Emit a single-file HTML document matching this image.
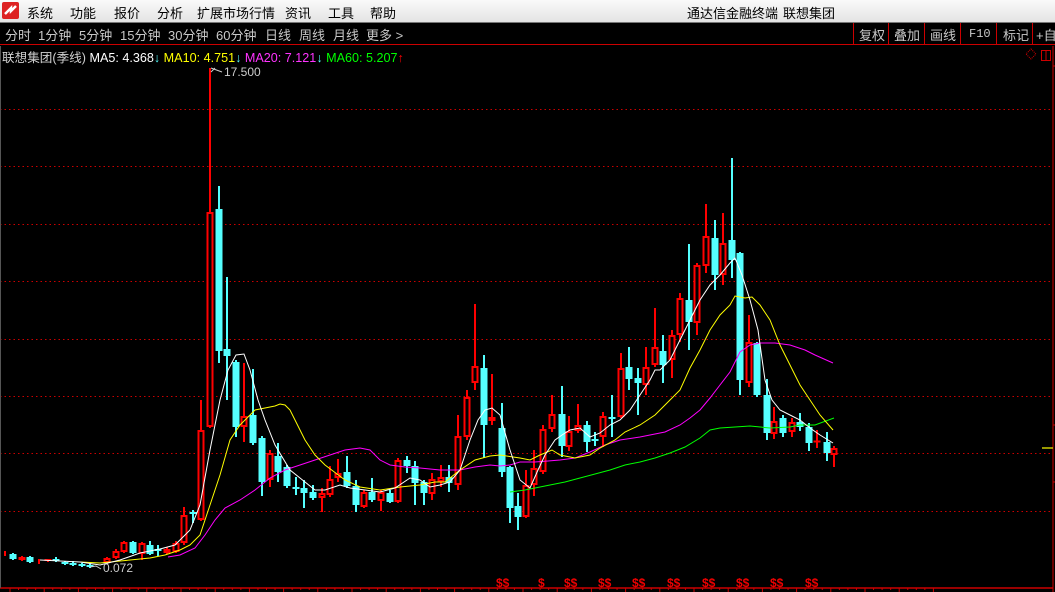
<!DOCTYPE html>
<html><head><meta charset="utf-8">
<style>
*{margin:0;padding:0;box-sizing:border-box}
body{width:1055px;height:592px;overflow:hidden;background:#000;font-family:"Liberation Sans","Noto Sans CJK SC",sans-serif;position:relative}
#menu{position:absolute;left:0;top:0;width:1055px;height:23px;background:linear-gradient(#fafafa,#e4e4e4);border-bottom:1px solid #777;font-size:13px;color:#000}
#menu span{position:absolute;top:3px;white-space:nowrap}
#tb{position:absolute;left:0;top:23px;width:1055px;height:22px;border-bottom:1px solid #c00;font-size:13px;color:#c8c8c8}
#tb span{position:absolute;top:2px;white-space:nowrap}
.btn{position:absolute;top:0;height:22px;border-left:1px solid #c00}
#info{position:absolute;left:2px;top:47px;font-size:12.6px;white-space:nowrap;color:#d0d0d0}
svg{position:absolute;left:0;top:0}
</style></head><body>
<div id="menu">
<div style="position:absolute;left:2px;top:2px;width:17px;height:17px;background:#d22;border-radius:2px"><svg width="17" height="17"><path d="M3 12 L9 6 L9 9 L14 4" stroke="#fff" stroke-width="2.5" fill="none"/></svg></div>
<span style="left:27px">系统</span><span style="left:70px">功能</span><span style="left:114px">报价</span><span style="left:157px">分析</span><span style="left:197px">扩展市场行情</span><span style="left:285px">资讯</span><span style="left:328px">工具</span><span style="left:370px">帮助</span>
<span style="left:687px">通达信金融终端</span><span style="left:783px">联想集团</span>
</div>
<div id="tb">
<span style="left:5px">分时</span><span style="left:38px">1分钟</span><span style="left:79px">5分钟</span><span style="left:120px">15分钟</span><span style="left:168px">30分钟</span><span style="left:216px">60分钟</span><span style="left:265px">日线</span><span style="left:299px">周线</span><span style="left:333px">月线</span><span style="left:366px">更多 &gt;</span>
<div class="btn" style="left:853px"></div><div class="btn" style="left:888px"></div><div class="btn" style="left:924px"></div><div class="btn" style="left:960px"></div><div class="btn" style="left:996px"></div><div class="btn" style="left:1032px"></div>
<span style="left:859px">复权</span><span style="left:894px">叠加</span><span style="left:930px">画线</span><span style="left:969px;top:4px;font-family:'Liberation Mono',monospace;font-size:12px">F10</span><span style="left:1003px">标记</span><span style="left:1036px">+自</span>
</div>
<div id="info">联想集团(季线) <span style="color:#fff">MA5: 4.368</span><span style="color:#5ff">↓</span> <span style="color:#ff0">MA10: 4.751</span><span style="color:#5ff">↓</span> <span style="color:#f3f">MA20: 7.121</span><span style="color:#5ff">↓</span> <span style="color:#0f0">MA60: 5.207</span><span style="color:#f00">↑</span></div>
<svg id="c" width="1055" height="592" style="pointer-events:none">
<g stroke="#c00" stroke-width="1" stroke-dasharray="1.5 3">
<line x1="0" y1="109.5" x2="1052" y2="109.5"/><line x1="0" y1="166.5" x2="1052" y2="166.5"/><line x1="0" y1="224.5" x2="1052" y2="224.5"/><line x1="0" y1="281.5" x2="1052" y2="281.5"/><line x1="0" y1="339.5" x2="1052" y2="339.5"/><line x1="0" y1="396.5" x2="1052" y2="396.5"/><line x1="0" y1="453.5" x2="1052" y2="453.5"/><line x1="0" y1="511.5" x2="1052" y2="511.5"/>
</g>
<line x1="1053" y1="46" x2="1053" y2="592" stroke="#c00"/>
<line x1="0" y1="588" x2="1053" y2="588" stroke="#c00" stroke-width="1.5"/>
<line x1="0.5" y1="46" x2="0.5" y2="588" stroke="#555"/>
<line x1="1042" y1="448" x2="1053" y2="448" stroke="#cc0" stroke-width="1.5"/>
<path d="M1031 49 L1036 54 L1031 59 L1026 54 Z" stroke="#c00" fill="none" stroke-dasharray="1 1"/>
<rect x="1041.5" y="50.5" width="9" height="10" stroke="#c00" fill="none"/><line x1="1046" y1="50" x2="1046" y2="61" stroke="#c00"/>
<g id="cand"></g>
<g fill="none" stroke-width="1">
<polyline id="m60" stroke="#0f0"/><polyline id="m20" stroke="#f0f"/><polyline id="m10" stroke="#ff0"/><polyline id="m5" stroke="#fff"/>
</g>
<path d="M211 72 L215 68 M211 68 L222 72" stroke="#ccc" fill="none"/>
<text x="224" y="76" fill="#ccc" font-size="12" font-family="Liberation Sans">17.500</text>
<path d="M90 567 L96 566 L101 569" stroke="#ccc" fill="none"/>
<text x="103" y="572" fill="#ccc" font-size="12" font-family="Liberation Sans">0.072</text>
<g fill="#e00" font-size="12" font-weight="bold" font-family="Liberation Sans">
<text x="496" y="587">$$</text><text x="538" y="587">$</text><text x="564" y="587">$$</text><text x="598" y="587">$$</text><text x="632" y="587">$$</text><text x="667" y="587">$$</text><text x="702" y="587">$$</text><text x="736" y="587">$$</text><text x="770" y="587">$$</text><text x="805" y="587">$$</text>
</g>
<g id="ticks" stroke="#c00"></g>
</svg>
<script>
var D=[[5,555,553,551,556],[13,554,559,553,560],[22,560,557,556,561],[30,557,562,556,563],[39,562,560,559,564],[48,561,560,559,562],[56,560,560,557,562],[65,562,564,561,565],[73,563,565,561,566],[82,564,566,563,567],[90,565,567,564,568],[107,563,558,557,564],[116,558,551,549,559],[124,552,542,541,553],[133,542,553,541,554],[142,554,543,542,560],[150,545,554,541,555],[158,550,550,545,556],[167,553,549,547,554],[176,552,543,541,553],[184,543,515,507,545],[193,513,513,510,523],[201,520,430,400,521],[210,427,212,68,428],[219,209,351,186,363],[227,349,356,277,400],[236,362,427,360,437],[244,427,416,363,442],[253,415,443,369,445],[262,438,482,436,496],[270,480,453,450,487],[278,456,472,443,482],[287,467,486,465,488],[296,488,488,477,495],[304,488,493,480,508],[313,492,498,485,500],[322,498,493,488,512],[330,495,479,466,497],[338,478,473,459,482],[347,472,486,456,488],[356,486,505,480,512],[364,507,492,490,508],[372,492,500,478,502],[381,501,492,490,511],[390,493,502,490,503],[398,502,460,458,503],[407,460,466,456,473],[415,466,483,461,505],[424,482,493,480,505],[432,494,479,473,500],[441,482,477,465,487],[449,477,483,465,492],[458,485,436,415,490],[467,437,397,390,440],[475,383,366,304,390],[484,368,425,355,458],[492,421,417,374,425],[502,428,472,403,477],[510,467,508,466,523],[518,506,517,493,530],[526,517,485,470,518],[534,485,468,450,496],[543,472,429,425,474],[552,429,414,395,432],[562,414,446,386,457],[569,447,431,416,451],[578,431,425,404,433],[587,425,442,421,452],[595,440,440,432,446],[603,437,416,412,447],[612,418,418,395,437],[621,417,368,353,418],[629,367,379,347,390],[638,378,383,368,415],[646,385,367,347,395],[655,365,347,308,367],[663,351,365,335,383],[672,360,335,330,378],[680,335,298,293,342],[689,300,322,244,350],[697,323,265,263,335],[706,266,236,204,273],[715,238,275,220,290],[723,275,243,213,285],[732,240,260,158,278],[740,253,380,252,395],[749,383,342,315,387],[757,343,395,342,397],[767,395,433,379,440],[774,434,421,407,439],[783,418,433,415,437],[792,432,422,418,437],[800,422,427,413,431],[809,427,443,423,451],[817,442.5,441.5,430,448],[827,442,453,432,461],[834,455,448,446,467]];
var s='';
D.forEach(function(d){var x=d[0],o=d[1],c=d[2],h=d[3],l=d[4];var up=c<o;var col=up?'#f00':'#5ff';var t=Math.min(o,c),b=Math.max(o,c);
s+='<rect x="'+(x-1)+'" y="'+h+'" width="2" height="'+(l-h)+'" fill="'+col+'"/>';
if(b-t<2){s+='<rect x="'+(x-3.5)+'" y="'+(t-1)+'" width="7" height="2" fill="'+col+'"/>';}
else if(up){s+='<rect x="'+(x-2.5)+'" y="'+(t+1)+'" width="5" height="'+(b-t-2)+'" fill="#000" stroke="'+col+'" stroke-width="2"/>';}
else{s+='<rect x="'+(x-3.5)+'" y="'+t+'" width="7" height="'+(b-t)+'" fill="'+col+'"/>';}});
document.getElementById('cand').innerHTML=s;
function P(id,a){document.getElementById(id).setAttribute('points',a);}
P('m5','40,560 80,562 100,565 120,560 140,553 160,549 175,545 190,530 200,505 210,450 220,400 228,370 236,355 244,354 250,370 258,400 265,420 275,445 290,470 300,478 315,490 325,490 340,485 350,488 365,490 380,492 395,488 410,478 420,480 430,487 440,485 450,482 460,470 470,440 478,420 485,410 492,408 500,415 510,450 520,480 530,488 538,470 545,455 555,440 562,435 570,430 580,428 590,437 600,433 610,425 620,420 630,410 640,395 650,380 655,370 660,370 670,360 680,340 690,320 700,300 710,285 720,275 730,263 735,258 742,275 750,300 758,330 765,380 772,400 780,410 790,415 800,420 810,428 820,435 833,443');
P('m10','80,562 100,563 130,560 150,558 165,555 180,550 190,545 200,535 210,505 220,475 230,440 240,425 255,410 265,408 275,406 280,404 285,405 290,410 295,420 305,440 315,455 325,465 345,480 360,487 380,490 400,487 420,485 435,482 445,482 460,470 475,460 490,456 500,455 520,458 530,460 540,455 552,450 560,455 575,458 590,455 600,448 615,440 625,432 640,425 655,415 665,405 680,390 690,368 700,350 710,330 720,315 730,305 735,296 745,298 752,297 760,305 770,320 780,345 790,365 800,385 810,400 820,415 833,430');
P('m20','168,557 180,555 195,548 205,535 215,520 225,508 240,500 255,490 270,478 285,470 300,465 315,460 330,455 345,450 360,448 370,450 380,460 390,465 405,467 420,468 440,470 460,470 475,467 490,465 500,466 510,465 520,462 535,462 548,461 560,460 575,458 590,452 605,445 620,440 640,437 655,434 665,432 680,425 690,418 700,410 710,398 720,385 730,372 740,352 750,345 760,343 775,343 790,345 805,350 815,355 833,363');
P('m60','510,492 525,490 535,488 550,485 565,482 580,478 595,474 610,470 625,465 640,462 655,458 670,453 685,447 700,438 710,430 720,428 735,427 750,426 770,428 790,427 800,425 815,425 834,418');
var t='';for(var x=10;x<940;x+=8.55){var big=Math.round((x-10)/8.55)%4==0;t+='<line x1="'+x+'" y1="588" x2="'+x+'" y2="'+(big?592:590)+'"/>';}
t+='<line x1="1053" y1="66" x2="1055" y2="66"/><line x1="1053" y1="425" x2="1055" y2="425"/><line x1="1053" y1="482" x2="1055" y2="482"/>';
document.getElementById('ticks').innerHTML=t;
</script>
</body></html>
